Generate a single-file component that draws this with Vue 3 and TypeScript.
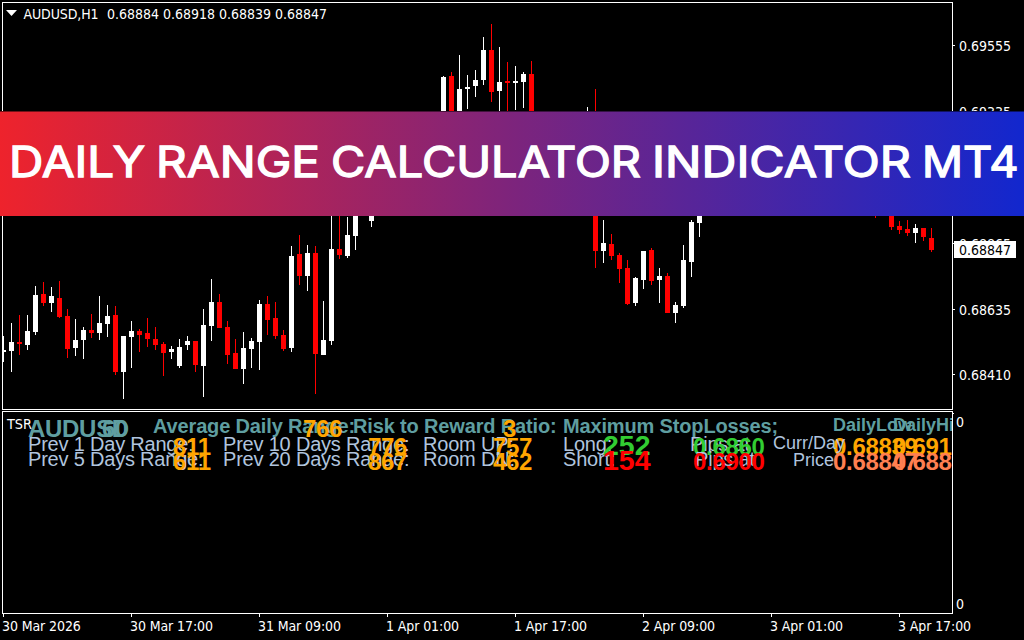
<script setup lang="ts">
import { computed } from 'vue'

// slot, high, body top, body bottom, low, direction
type Candle = [number, number, number, number, number, 'up' | 'down']

const STEP = 8

const candles: Candle[] = [
  [0, 336, 350, 352, 362, 'up'],
  [1, 323, 342, 351, 372, 'up'],
  [2, 315, 342, 344, 355, 'down'],
  [3, 315, 331, 345, 350, 'up'],
  [4, 286, 295, 332, 335, 'up'],
  [5, 282, 294, 303, 306, 'down'],
  [6, 287, 296, 303, 312, 'up'],
  [7, 281, 298, 317, 318, 'down'],
  [8, 309, 316, 349, 358, 'down'],
  [9, 319, 340, 348, 356, 'up'],
  [10, 327, 330, 340, 359, 'up'],
  [11, 314, 330, 333, 338, 'down'],
  [12, 296, 323, 333, 340, 'up'],
  [13, 305, 316, 324, 337, 'up'],
  [14, 306, 315, 372, 375, 'down'],
  [15, 336, 336, 372, 399, 'up'],
  [16, 321, 331, 337, 368, 'up'],
  [17, 329, 331, 335, 352, 'down'],
  [18, 318, 333, 339, 347, 'down'],
  [19, 327, 339, 345, 350, 'down'],
  [20, 342, 344, 353, 376, 'down'],
  [21, 346, 349, 352, 359, 'up'],
  [22, 339, 347, 366, 368, 'up'],
  [23, 336, 341, 345, 350, 'up'],
  [24, 341, 341, 365, 372, 'down'],
  [25, 309, 325, 366, 397, 'up'],
  [26, 279, 302, 326, 341, 'up'],
  [27, 294, 302, 328, 328, 'down'],
  [28, 321, 327, 355, 364, 'down'],
  [29, 339, 353, 369, 369, 'down'],
  [30, 332, 348, 369, 384, 'up'],
  [31, 338, 341, 349, 368, 'up'],
  [32, 300, 304, 342, 370, 'up'],
  [33, 296, 304, 320, 335, 'down'],
  [34, 302, 318, 336, 339, 'down'],
  [35, 330, 335, 349, 351, 'down'],
  [36, 246, 256, 348, 352, 'up'],
  [37, 235, 254, 276, 285, 'down'],
  [38, 245, 253, 276, 291, 'up'],
  [39, 246, 253, 354, 394, 'down'],
  [40, 301, 340, 355, 355, 'up'],
  [41, 200, 249, 341, 345, 'up'],
  [42, 200, 249, 255, 259, 'down'],
  [43, 217, 235, 256, 258, 'up'],
  [44, 200, 200, 236, 250, 'up'],
  [46, 190, 200, 221, 227, 'up'],
  [55, 76, 77, 130, 140, 'up'],
  [56, 72, 76, 120, 130, 'down'],
  [57, 55, 89, 120, 130, 'up'],
  [58, 75, 87, 89, 109, 'up'],
  [59, 70, 80, 86, 97, 'up'],
  [60, 37, 50, 80, 85, 'up'],
  [61, 24, 50, 92, 102, 'down'],
  [62, 47, 82, 91, 120, 'up'],
  [63, 62, 81, 83, 120, 'down'],
  [64, 66, 81, 83, 110, 'up'],
  [65, 72, 74, 82, 108, 'up'],
  [66, 61, 74, 130, 140, 'down'],
  [73, 107, 130, 150, 160, 'up'],
  [74, 89, 130, 251, 268, 'down'],
  [75, 220, 243, 251, 263, 'up'],
  [76, 234, 244, 256, 260, 'down'],
  [77, 253, 255, 269, 283, 'down'],
  [78, 260, 268, 304, 305, 'down'],
  [79, 277, 278, 303, 306, 'up'],
  [80, 251, 251, 280, 289, 'up'],
  [81, 248, 250, 281, 285, 'down'],
  [82, 268, 276, 280, 303, 'up'],
  [83, 273, 276, 313, 313, 'down'],
  [84, 302, 305, 313, 323, 'up'],
  [85, 245, 260, 306, 308, 'up'],
  [86, 220, 222, 262, 277, 'up'],
  [87, 190, 200, 223, 237, 'up'],
  [109, 190, 200, 212, 218, 'down'],
  [111, 200, 205, 227, 230, 'down'],
  [112, 221, 226, 230, 234, 'down'],
  [113, 220, 229, 233, 236, 'down'],
  [114, 224, 228, 233, 243, 'up'],
  [115, 228, 228, 237, 241, 'down'],
  [116, 228, 238, 250, 252, 'down'],
]

const bars = computed(() =>
  candles.map(([slot, high, top, bottom, low, dir]) => ({
    x: 3 + slot * STEP,
    high,
    top,
    bottom,
    low,
    dir,
  }))
)

const prices = [
  { y: 46, text: '0.69555' },
  { y: 112, text: '0.69335' },
  { y: 244, text: '0.68865' },
  { y: 310, text: '0.68635' },
  { y: 375, text: '0.68410' },
]

const times = [
  '30 Mar 2026',
  '30 Mar 17:00',
  '31 Mar 09:00',
  '1 Apr 01:00',
  '1 Apr 17:00',
  '2 Apr 09:00',
  '3 Apr 01:00',
  '3 Apr 17:00',
]

interface Label {
  x: number
  y: number
  kind: string
  text: string
}

// indicator objects, in drawing order
const labels: Label[] = [
  { x: 28, y: 437, kind: 'value teal', text: 'AUDUSD' },
  { x: 102, y: 437, kind: 'value teal', text: '60' },
  { x: 153, y: 433, kind: 'head', text: 'Average Daily Range:' },
  { x: 303, y: 437, kind: 'value', text: '766' },
  { x: 28, y: 451, kind: 'label', text: 'Prev 1 Day Range:' },
  { x: 173, y: 455, kind: 'value', text: '811' },
  { x: 28, y: 466, kind: 'label', text: 'Prev 5 Days Range:' },
  { x: 173, y: 470, kind: 'value', text: '611' },
  { x: 223, y: 451, kind: 'label', text: 'Prev 10 Days Range:' },
  { x: 368, y: 455, kind: 'value', text: '776' },
  { x: 223, y: 466, kind: 'label', text: 'Prev 20 Days Range:' },
  { x: 368, y: 470, kind: 'value', text: '867' },
  { x: 353, y: 433, kind: 'head', text: 'Risk to Reward Ratio:' },
  { x: 503, y: 437, kind: 'value', text: '3' },
  { x: 423, y: 451, kind: 'label', text: 'Room UP:' },
  { x: 493, y: 455, kind: 'value', text: '757' },
  { x: 423, y: 466, kind: 'label', text: 'Room DN:' },
  { x: 493, y: 470, kind: 'value', text: '462' },
  { x: 563, y: 433, kind: 'head', text: 'Maximum StopLosses;' },
  { x: 563, y: 451, kind: 'label', text: 'Long:' },
  { x: 603, y: 455, kind: 'big lime', text: '252' },
  { x: 563, y: 466, kind: 'label', text: 'Short:' },
  { x: 603, y: 470, kind: 'big red', text: '154' },
  { x: 690, y: 451, kind: 'label', text: 'Pips at' },
  { x: 693, y: 455, kind: 'value lime', text: '0.6860' },
  { x: 695, y: 466, kind: 'label', text: 'Pips at' },
  { x: 693, y: 470, kind: 'value red', text: '0.6900' },
  { x: 833, y: 431, kind: 'sub', text: 'DailyLow' },
  { x: 893, y: 431, kind: 'sub', text: 'DailyHi' },
  { x: 833, y: 455, kind: 'value', text: '0.68839' },
  { x: 893, y: 455, kind: 'value', text: '0.691' },
  { x: 773, y: 449, kind: 'small', text: 'Curr/Day' },
  { x: 793, y: 466, kind: 'small', text: 'Price' },
  { x: 833, y: 470, kind: 'value coral', text: '0.68847' },
  { x: 893, y: 470, kind: 'value coral', text: '0.688' },
]

const title = [
  { x: 9, width: 136, text: 'DAILY' },
  { x: 156, width: 164, text: 'RANGE' },
  { x: 331, width: 310, text: 'CALCULATOR' },
  { x: 652, width: 259, text: 'INDICATOR' },
  { x: 922, width: 96.500, text: 'MT4' },
]
</script>

<template>
  <div class="terminal">
    <section class="panel chart">
      <svg viewBox="3 3 949 406" width="949" height="406" shape-rendering="crispEdges">
        <path d="M6 10h11l-5.500 6z" fill="#fff" shape-rendering="auto" />
        <text class="axis" x="23.500" y="19" textLength="75">AUDUSD,H1</text>
        <text class="axis" x="107" y="19" textLength="220">0.68884 0.68918 0.68839 0.68847</text>
        <g v-for="bar in bars" :key="bar.x" :class="bar.dir">
          <rect :x="bar.x" :y="bar.high" width="1" :height="bar.low - bar.high" />
          <rect :x="bar.x - 2" :y="bar.top" width="5" :height="bar.bottom - bar.top" />
        </g>
      </svg>
    </section>

    <svg class="scale" viewBox="953 2 71 408" width="71" height="408">
      <g v-for="price in prices" :key="price.text">
        <rect x="953" :y="price.y - 1" width="2" height="1" fill="#fff" />
        <text class="axis" x="959" :y="price.y + 5" textLength="52">{{ price.text }}</text>
      </g>
      <rect x="954" y="241" width="62" height="17" fill="#fff" />
      <text class="axis current" x="959" y="255" textLength="52">0.68847</text>
    </svg>

    <section class="panel indicator">
      <svg viewBox="3 412 949 201" width="949" height="201">
        <text class="axis" x="7" y="429" textLength="25" lengthAdjust="spacingAndGlyphs">TSR</text>
        <text v-for="(l, i) in labels" :key="i" :class="l.kind" :x="l.x" :y="l.y">{{ l.text }}</text>
      </svg>
    </section>

    <svg class="scale" viewBox="953 411 71 203" width="71" height="203">
      <rect x="953" y="413" width="1" height="1" fill="#fff" />
      <text class="axis" x="956" y="427">0</text>
      <text class="axis" x="956" y="609">0</text>
    </svg>

    <footer class="times">
      <span v-for="time in times" :key="time">{{ time }}</span>
    </footer>

    <div class="banner">
      <svg viewBox="0 111 1024 105" width="1024" height="105">
        <text
          v-for="word in title"
          :key="word.text"
          :x="word.x"
          y="176.500"
          :textLength="word.width"
          lengthAdjust="spacingAndGlyphs"
        >{{ word.text }}</text>
      </svg>
    </div>
  </div>
</template>

<style>
body {
  margin: 0;
  background: #000;
}
</style>

<style scoped>
.terminal {
  position: relative;
  box-sizing: border-box;
  display: grid;
  grid-template-columns: 951px 71px;
  grid-template-rows: 408px 203px 26px;
  row-gap: 1px;
  width: 1024px;
  height: 640px;
  padding: 2px 0 0 2px;
  overflow: hidden;
  background: #000;
}

svg {
  display: block;
}

.panel {
  box-sizing: border-box;
  border: 1px solid #fff;
}

.axis,
.times {
  font-family: 'DejaVu Sans Condensed', 'DejaVu Sans', sans-serif;
  font-stretch: condensed;
  font-size: 14px;
  fill: #fff;
  color: #fff;
}

.axis {
  white-space: pre;
}

.current {
  fill: #000;
}

.up {
  fill: #fff;
}

.down {
  fill: #f00;
}

.times {
  grid-column: 1 / 3;
  display: flex;
  margin-top: -1px;
}

.times span {
  position: relative;
  flex: 0 0 128px;
  line-height: 24px;
  letter-spacing: -0.1px;
  white-space: nowrap;
}

.times span::before {
  content: '';
  position: absolute;
  top: 0;
  left: 1px;
  width: 1px;
  height: 3px;
  background: #fff;
}

.indicator text:not(.axis) {
  font-family: 'Liberation Sans', Arial, sans-serif;
}

.label {
  font-size: 20px;
  letter-spacing: -0.2px;
  fill: #b0c4de;
}

.small {
  font-size: 18px;
  fill: #b0c4de;
}

.head {
  font-size: 20px;
  font-weight: 700;
  letter-spacing: -0.15px;
  fill: #5f9ea0;
}

.sub {
  font-size: 18px;
  font-weight: 700;
  fill: #5f9ea0;
}

.value {
  font-size: 24px;
  font-weight: 700;
  letter-spacing: -0.3px;
  fill: #ffa500;
}

.big {
  font-size: 28.5px;
  font-weight: 700;
}

.teal {
  fill: #5f9ea0;
}

.lime {
  fill: #32cd32;
}

.red {
  fill: #f00;
}

.coral {
  fill: #ff7f50;
}

.banner {
  position: absolute;
  top: 111px;
  left: 0;
  width: 1024px;
  height: 105px;
  background: linear-gradient(90deg, #ee232c, #7d247c 50%, #1227ce);
  box-shadow: inset 0 1px rgba(0, 0, 0, 0.5);
}

.banner text {
  font-family: Inter, sans-serif;
  font-size: 42px;
  font-weight: 400;
  fill: #fff;
  stroke: #fff;
  stroke-width: 1.3px;
}
</style>
